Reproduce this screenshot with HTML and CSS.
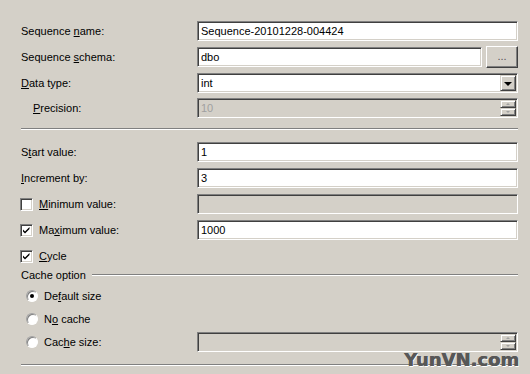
FILE: index.html
```html
<!doctype html>
<html>
  <head>
    <meta charset="utf-8">
    <title>New Sequence - General</title>
    <link rel="stylesheet" href="styles.css">
  </head>
  <body>
    <div class="page">
      <div class="rows top">
        <div class="row">
          <label class="label"><span>Sequence <u>n</u>ame:</span></label>
          <div class="field">Sequence-20101228-004424</div>
        </div>
        <div class="row tall">
          <label class="label"><span>Sequence <u>s</u>chema:</span></label>
          <div class="field short">dbo</div>
          <div class="btn browse">...</div>
        </div>
        <div class="row">
          <label class="label"><span><u>D</u>ata type:</span></label>
          <div class="field combo">
            <span class="value">int</span>
            <span class="drop"><span class="arrow"></span></span>
          </div>
        </div>
        <div class="row">
          <label class="label indent"><span><u>P</u>recision:</span></label>
          <div class="field disabled spin">
            <span class="value">10</span>
            <span class="spinner"><span class="up"></span><span class="down"></span></span>
          </div>
        </div>
      </div>

      <div class="sep first"></div>

      <div class="rows mid">
        <div class="row">
          <label class="label"><span>S<u>t</u>art value:</span></label>
          <div class="field">1</div>
        </div>
        <div class="row">
          <label class="label"><span><u>I</u>ncrement by:</span></label>
          <div class="field">3</div>
        </div>
        <div class="row">
          <label class="label"><span class="check"></span><span><u>M</u>inimum value:</span></label>
          <div class="field disabled"></div>
        </div>
        <div class="row">
          <label class="label"><span class="check on"><svg width="13" height="13" viewBox="0 0 13 13"><path d="M3 5.5 L5 7.5 L9.5 3 L9.5 5 L5 9.5 L3 7.5 Z" fill="#000"/></svg></span><span>Ma<u>x</u>imum value:</span></label>
          <div class="field">1000</div>
        </div>
        <div class="row">
          <label class="label"><span class="check on"><svg width="13" height="13" viewBox="0 0 13 13"><path d="M3 5.5 L5 7.5 L9.5 3 L9.5 5 L5 9.5 L3 7.5 Z" fill="#000"/></svg></span><span><u>C</u>ycle</span></label>
        </div>
      </div>

      <div class="legend">
        <span>Cache option</span>
        <span class="line"></span>
      </div>

      <div class="rows radios">
        <div class="row">
          <label class="label radio-label"><span class="radio on"></span><span>De<u>f</u>ault size</span></label>
        </div>
        <div class="row">
          <label class="label radio-label"><span class="radio"></span><span>N<u>o</u> cache</span></label>
        </div>
        <div class="row">
          <label class="label radio-label"><span class="radio"></span><span>Cac<u>h</u>e size:</span></label>
          <div class="field disabled spin">
            <span class="value"></span>
            <span class="spinner"><span class="up"></span><span class="down"></span></span>
          </div>
        </div>
      </div>

      <div class="sep last"></div>

      <div class="watermark">YunVN.com</div>
    </div>
  </body>
</html>
```

FILE: styles.css
```css
html, body {
  margin: 0;
  padding: 0;
  background-color: #d4d0c8;
}
body {
  color: #000;
  font-family: "Liberation Sans", Arial, sans-serif;
  font-size: 11px;
  width: 530px;
  height: 374px;
  overflow: hidden;
}
u {
  text-decoration: underline;
  text-underline-offset: 1px;
}

.page {
  position: relative;
  height: 100%;
  padding: 21px 12px 0 21px;
  box-sizing: border-box;
}

.rows {
  display: flex;
  flex-direction: column;
}
.rows.top {
  gap: 5px;
}
.rows.mid {
  gap: 6px;
  margin-top: 12px;
}
.rows.radios {
  gap: 3px;
  margin-top: 4px;
}

.row {
  display: flex;
  align-items: center;
  height: 20px;
}
.row.tall {
  height: 22px;
}

.label {
  display: flex;
  align-items: center;
  width: 176px;
  flex: none;
  white-space: nowrap;
}
.label.indent {
  padding-left: 12px;
  box-sizing: border-box;
}

/* sunken 3d field */
.field {
  flex: 1;
  display: flex;
  align-items: center;
  height: 20px;
  box-sizing: border-box;
  padding: 0 2px 0 3px;
  background-color: #fff;
  border: 1px solid;
  border-color: #808080 #fff #fff #808080;
  box-shadow: inset 1px 1px #404040, inset -1px -1px #d4d0c8;
  white-space: nowrap;
  overflow: hidden;
}
.field.short {
  flex: none;
  width: 285px;
}
.field.disabled {
  background-color: #d4d0c8;
  color: #a0a0a0;
}
.field .value {
  flex: 1;
}

/* raised 3d button */
.btn {
  box-sizing: border-box;
  background-color: #d4d0c8;
  border: 1px solid;
  border-color: #fff #404040 #404040 #fff;
  box-shadow: inset -1px -1px #808080;
}
.browse {
  width: 32px;
  height: 22px;
  margin-left: 4px;
  display: flex;
  align-items: center;
  justify-content: center;
  color: #555;
  padding-bottom: 2px;
}

.combo {
  padding-right: 1px;
}
.drop {
  width: 16px;
  height: 16px;
  box-sizing: border-box;
  background-color: #d4d0c8;
  border: 1px solid;
  border-color: #d4d0c8 #404040 #404040 #d4d0c8;
  box-shadow: inset 1px 1px #fff, inset -1px -1px #808080;
  display: flex;
  align-items: center;
  justify-content: center;
}
.arrow {
  width: 0;
  height: 0;
  border-left: 4px solid transparent;
  border-right: 4px solid transparent;
  border-top: 4px solid #000;
  margin-top: 1px;
}

.spin {
  padding-right: 1px;
}
.spinner {
  display: flex;
  flex-direction: column;
  width: 16px;
  height: 16px;
}
.spinner span {
  flex: 1;
  box-sizing: border-box;
  background-color: #d4d0c8;
  border: 1px solid;
  border-color: #d4d0c8 #404040 #404040 #d4d0c8;
  box-shadow: inset 1px 1px #fff, inset -1px -1px #808080;
  position: relative;
}
.spinner span::after {
  content: "";
  position: absolute;
  left: 5px;
  top: 2px;
  border-left: 2px solid transparent;
  border-right: 2px solid transparent;
}
.spinner .up::after {
  border-bottom: 2px solid #a0a0a0;
}
.spinner .down::after {
  border-top: 2px solid #a0a0a0;
}

/* checkbox and radio */
.check {
  width: 13px;
  height: 13px;
  box-sizing: border-box;
  margin: 0 6px 0 -1px;
  background-color: #fff;
  border: 1px solid;
  border-color: #808080 #fff #fff #808080;
  box-shadow: inset 1px 1px #404040, inset -1px -1px #d4d0c8;
  position: relative;
}
.check svg {
  position: absolute;
  left: -1px;
  top: -1px;
}
.radio-label {
  padding-left: 5px;
  box-sizing: border-box;
}
.radio {
  width: 12px;
  height: 12px;
  box-sizing: border-box;
  margin-right: 6px;
  border-radius: 50%;
  background-color: #fff;
  border: 1px solid;
  border-color: #a0a0a0 #fff #fff #a0a0a0;
  box-shadow: inset 1px 1px #808080;
  display: flex;
  align-items: center;
  justify-content: center;
}
.radio.on::after {
  content: "";
  width: 4px;
  height: 4px;
  border-radius: 50%;
  background-color: #000;
}

/* etched separator */
.sep {
  height: 0;
  border-top: 1px solid #808080;
  border-bottom: 1px solid #fff;
}
.sep.first {
  margin-top: 10px;
}
.sep.last {
  margin-top: 12px;
}

.legend {
  display: flex;
  align-items: center;
  height: 14px;
  margin-top: 2px;
}
.legend .line {
  flex: 1;
  margin-left: 6px;
  border-top: 1px solid #808080;
  border-bottom: 1px solid #fff;
}

.watermark {
  position: absolute;
  left: 404px;
  top: 349px;
  font-family: "DejaVu Sans", Verdana, sans-serif;
  font-weight: bold;
  font-size: 18px;
  color: #575757;
  text-shadow: 0.6px 0 0 #575757, 1px 1px 0 #fff;
}
```
